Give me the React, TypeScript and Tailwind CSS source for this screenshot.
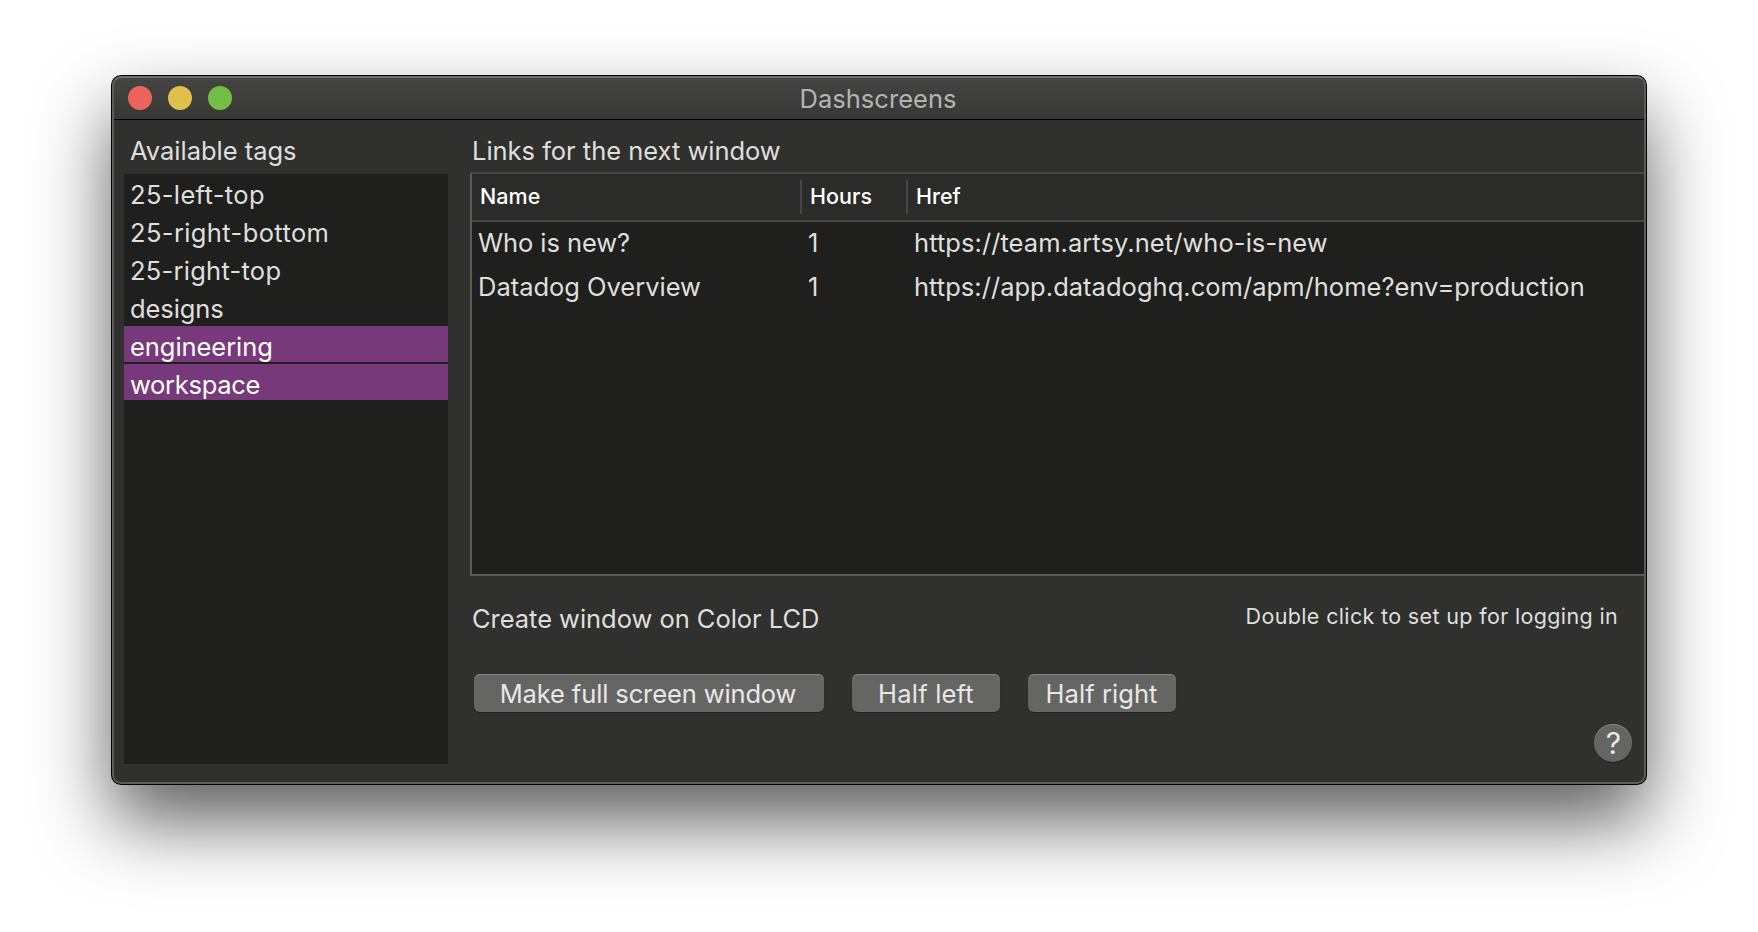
import clsx from "clsx";

type Tag = { name: string; selected?: boolean; tracking: string };

const tags: Tag[] = [
  { name: "25-left-top", tracking: "tracking-[0.36px]" },
  { name: "25-right-bottom", tracking: "tracking-[0.38px]" },
  { name: "25-right-top", tracking: "tracking-[0.25px]" },
  { name: "designs", tracking: "tracking-[-0.08px]" },
  { name: "engineering", selected: true, tracking: "tracking-[-0.06px]" },
  { name: "workspace", selected: true, tracking: "tracking-[-0.3px]" },
];

const links = [
  { name: "Who is new?", hours: 1, href: "https://team.artsy.net/who-is-new", nameTracking: "tracking-[-0.08px]", hrefTracking: "tracking-[0.06px]" },
  { name: "Datadog Overview", hours: 1, href: "https://app.datadoghq.com/apm/home?env=production", nameTracking: "tracking-[-0.02px]", hrefTracking: "tracking-[0.025px]" },
];

function TitleBar() {
  return (
    <header className="grid h-11 shrink-0 grid-cols-[1fr_auto_1fr] border-b border-black bg-linear-to-b from-[#454543] to-[#373735]">
      <div className="flex gap-4 pt-[10px] pl-4">
        <span className="size-6 rounded-full bg-[#ed655a]" />
        <span className="size-6 rounded-full bg-[#e0c04c]" />
        <span className="size-6 rounded-full bg-[#72be47]" />
      </div>
      <h1 className="pt-px pr-[2px] leading-[44px] tracking-[0.03px] text-[#b4b4b3]">Dashscreens</h1>
      <div />
    </header>
  );
}

function TagList() {
  return (
    <aside className="flex w-[324px] shrink-0 flex-col">
      <h2 className="h-[54px] pl-[6px] leading-[61px] tracking-[-0.02px]">Available tags</h2>
      <ul className="flex h-[590px] flex-col gap-[2px] bg-[#1f1f1d]">
        {tags.map((tag) => (
          <li
            key={tag.name}
            className={clsx("h-9 pl-[6px] leading-[42px]", tag.tracking, tag.selected && "bg-[#77397a] text-white")}
          >
            {tag.name}
          </li>
        ))}
      </ul>
    </aside>
  );
}

function LinkTable() {
  return (
    <div className="flex h-[404px] flex-col border-2 border-r-0 border-t-[#464645] border-b-[#5a5a59] border-l-[#5a5a59] bg-[#1f1f1d]">
      <div className="flex h-12 shrink-0 border-b-2 border-[#464645] bg-[#2b2b2a] text-[21.5px] leading-[44px] font-medium text-white">
        <div className="w-[328px] pl-2 tracking-[0.05px]">Name</div>
        <div className="mt-[6px] h-[34px] w-[106px] border-l-2 border-[#464645] pl-2 leading-[32px] tracking-[0.05px]">Hours</div>
        <div className="mt-[6px] h-[34px] border-l-2 border-[#464645] pl-2 leading-[32px] tracking-[0px]">Href</div>
      </div>
      {links.map((link) => (
        <div key={link.name} className="flex h-11 shrink-0 leading-[42px]">
          <div className={clsx("w-[328px] pl-[6px]", link.nameTracking)}>{link.name}</div>
          <div className="w-[106px] pl-2">{link.hours}</div>
          <div className={clsx("pl-2", link.hrefTracking)}>{link.href}</div>
        </div>
      ))}
    </div>
  );
}

function PushButton({ label, className }: { label: string; className: string }) {
  return (
    <button
      className={clsx(
        "h-[38px] rounded-[6px] bg-[#656563] text-center leading-[39px] text-[#e8e8e7] shadow-[inset_0_1px_0_#848482,0_1px_1px_rgba(0,0,0,0.35)]",
        className,
      )}
    >
      {label}
    </button>
  );
}

export default function App() {
  return (
    <div className="h-[932px] w-[1758px] overflow-hidden bg-white px-[112px] pt-[76px] font-['Inter',sans-serif] text-[25.5px] font-[430] text-[#dfdfde]">
      <div className="relative flex h-[708px] flex-col overflow-hidden rounded-[9px] bg-[#30302f] shadow-[0_0_0_1px_#000,0_37px_76px_rgba(0,0,0,0.64)]">
        <TitleBar />
        <main className="flex flex-1 pl-3">
          <TagList />
          <section className="ml-[22px] flex flex-1 flex-col">
            <h2 className="h-[52px] pl-[2px] leading-[61px] tracking-[-0.02px]">Links for the next window</h2>
            <LinkTable />
            <div className="flex h-[98px] justify-between pr-7 pl-[2px]">
              <p className="leading-[85px] tracking-[-0.04px]">Create window on Color LCD</p>
              <p className="text-[21.5px] leading-[80px] tracking-[0.35px]">Double click to set up for logging in</p>
            </div>
            <div className="flex gap-7 pl-1">
              <PushButton label="Make full screen window" className="w-[350px] pr-[2px] tracking-[-0.12px]" />
              <PushButton label="Half left" className="w-[148px] tracking-[0.2px]" />
              <PushButton label="Half right" className="w-[148px] pr-px tracking-[0.08px]" />
            </div>
            <div className="flex justify-end pt-3 pr-[14px]">
              <button className="size-[38px] rounded-full bg-[#656563] pl-px text-center text-[30px] leading-[39px] font-normal text-[#e8e8e7] shadow-[inset_0_1px_0_#848482,0_1px_1px_rgba(0,0,0,0.35)]">
                ?
              </button>
            </div>
          </section>
        </main>
        <div className="pointer-events-none absolute inset-0 rounded-[9px] border-2 border-[#5c5c5b] border-t-[#6e6e6c]" />
      </div>
    </div>
  );
}
